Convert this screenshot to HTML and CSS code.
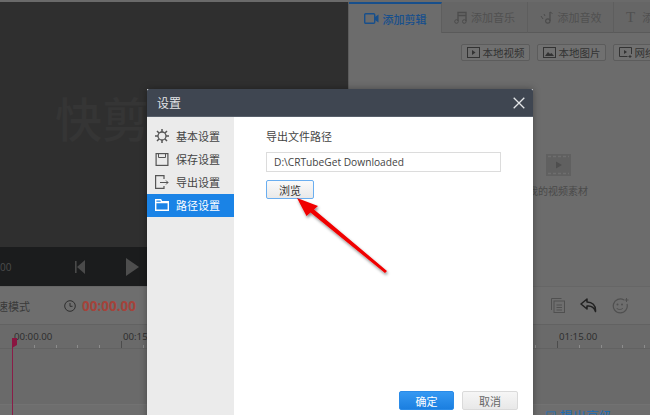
FILE: index.html
```html
<!DOCTYPE html>
<html lang="zh-CN">
<head>
  <meta charset="UTF-8" />
  <title>快剪辑 设置</title>
  <link rel="stylesheet" href="styles.css">
</head>
<body>
  <div class="app">
    <div class="topline"></div>

    <div class="main">
      <!-- Preview -->
      <div class="preview">
        <div class="video"><span class="watermark">快剪辑</span></div>
        <div class="controls">
          <span class="time-left">00</span>
          <svg class="ctl-prev" width="10" height="14" viewBox="0 0 10 14"><path d="M0 1h1.6v12H0zM10 0v14L2 7z" fill="#4a4a4a"/></svg>
          <svg class="ctl-play" width="13" height="18" viewBox="0 0 13 18"><path d="M0 0l13 9-13 9z" fill="#4e4e4e"/></svg>
        </div>
      </div>

      <!-- Material panel -->
      <div class="panel">
        <div class="tabs">
          <div class="tab active">
            <svg width="15" height="11" viewBox="0 0 15 11"><rect x=".7" y=".7" width="10" height="9.6" rx="1" fill="none" stroke="#174f8c" stroke-width="1.4"/><path d="M11 4l3.5-2.5v8L11 7z" fill="#174f8c"/></svg>
            添加剪辑
          </div>
          <div class="tab">
            <svg width="13" height="13" viewBox="0 0 13 13"><path d="M4 10V1.5h8V10M4 4.5h8" fill="none" stroke="#4c4c4c" stroke-width="1.3"/><circle cx="2.5" cy="10.5" r="1.8" fill="none" stroke="#4c4c4c"/><circle cx="10.3" cy="10.5" r="1.8" fill="none" stroke="#4c4c4c"/></svg>
            添加音乐
          </div>
          <div class="tab">
            <svg width="14" height="13" viewBox="0 0 14 13"><path d="M10 1v9" fill="none" stroke="#4c4c4c" stroke-width="1.3"/><circle cx="7.8" cy="10" r="2.2" fill="none" stroke="#4c4c4c" stroke-width="1.2"/><path d="M10 1l2.5 1.5M1 5l2 3M4 3l1 2" fill="none" stroke="#4c4c4c"/></svg>
            添加音效
          </div>
          <div class="tab tab-text">
            <span class="t-glyph">T</span>
            添加字幕
          </div>
        </div>

        <div class="src-row">
          <button class="src-btn">
            <svg width="13" height="11" viewBox="0 0 13 11"><rect x=".5" y=".5" width="12" height="10" fill="none" stroke="#333"/><path d="M5 3l3.5 2.5L5 8z" fill="#333"/></svg>
            本地视频
          </button>
          <button class="src-btn">
            <svg width="13" height="11" viewBox="0 0 13 11"><rect x=".5" y=".5" width="12" height="10" fill="none" stroke="#333"/><path d="M2 9l3-4 2 2 1.5-1L11 9z" fill="#333"/></svg>
            本地图片
          </button>
          <button class="src-btn">
            <svg width="13" height="12" viewBox="0 0 13 12"><path d="M12.500 7V.5H.5v9h8" fill="none" stroke="#333"/><path d="M5 3l3 2-3 2z" fill="#333"/><path d="M11 8v3M9.500 9.500h3" stroke="#333"/></svg>
            网络素材
          </button>
        </div>

        <div class="empty">
          <svg width="25" height="22" viewBox="0 0 25 22"><rect width="25" height="22" fill="#606060"/><path d="M2 2.500h21M2 19.500h21" stroke="#6e6e6e" stroke-width="1.500" stroke-dasharray="3 2"/><path d="M10 7.500l6 3.500-6 3.500z" fill="#4e4e4e"/></svg>
          <span>我的视频素材</span>
        </div>
      </div>
    </div>

    <!-- Timeline -->
    <div class="toolbar">
      <span class="mode">极速模式</span>
      <svg class="clock" width="12" height="12" viewBox="0 0 12 12"><circle cx="6" cy="6" r="5.300" fill="none" stroke="#2e2e2e"/><path d="M6 3v3.300h2.500" fill="none" stroke="#2e2e2e"/></svg>
      <span class="timecode">00:00.00</span>
      <div class="tool-icons">
        <svg width="14" height="15" viewBox="0 0 14 15"><path d="M.5 12V.5h10" fill="none" stroke="#505050"/><rect x="3" y="3" width="10.500" height="11.500" fill="none" stroke="#505050"/><path d="M5.500 7h5.500M5.500 9.500h5.500M5.500 12h5.500" stroke="#505050"/></svg>
        <svg width="17" height="15" viewBox="0 0 17 15"><path d="M7 1L1 6l6 5V8c4-.5 7 1 8.500 5.500C16 7 12 4 7 4z" fill="none" stroke="#222" stroke-width="1.500" stroke-linejoin="round"/></svg>
        <svg width="17" height="16" viewBox="0 0 17 16"><path d="M12 2a7 7 0 1 0 3 4" fill="none" stroke="#505050" stroke-width="1.200"/><circle cx="5.500" cy="6.500" r="1" fill="#505050"/><circle cx="10" cy="6.500" r="1" fill="#505050"/><path d="M4.500 10c1.500 2 5 2 6.500 0" fill="none" stroke="#505050"/><path d="M14.500 0v4M12.500 2h4" stroke="#505050"/></svg>
      </div>
    </div>

    <div class="timeline">
      <div class="ruler">
        <div class="mark">00:00.00</div>
        <div class="mark">00:15.00</div>
        <div class="mark">00:30.00</div>
        <div class="mark">00:45.00</div>
        <div class="mark">01:00.00</div>
        <div class="mark">01:15.00</div>
      </div>
      <div class="track"></div>
      <div class="track-foot"><span class="foot-link">☑ 提出高级</span></div>
      <div class="playhead"></div>
    </div>
  </div>

  <!-- Settings dialog -->
  <div class="dialog">
    <div class="dialog-head">
      <span>设置</span>
      <svg width="12" height="12" viewBox="0 0 12 12"><path d="M.7.7l10.600 10.600M11.300.7L.7 11.300" stroke="#e4e6e8" stroke-width="1.300"/></svg>
    </div>
    <div class="dialog-body">
      <ul class="side">
        <li>
          <svg width="14" height="14" viewBox="0 0 14 14"><circle cx="7" cy="7" r="4" fill="none" stroke="#555" stroke-width="1.300"/><path d="M7 0v3M7 11v3M0 7h3M11 7h3M2 2l2 2M10 10l2 2M12 2l-2 2M4 10l-2 2" stroke="#555" stroke-width="1.500"/></svg>
          基本设置
        </li>
        <li>
          <svg width="13" height="13" viewBox="0 0 13 13"><rect x=".6" y=".6" width="11.800" height="11.800" fill="none" stroke="#555" stroke-width="1.200"/><path d="M3 1v3.500h7V1" fill="none" stroke="#555"/></svg>
          保存设置
        </li>
        <li>
          <svg width="14" height="14" viewBox="0 0 14 14"><path d="M9 4V.6H.6v12.800H9V11" fill="none" stroke="#555" stroke-width="1.200"/><path d="M5 7.500h8M11 5.500l2 2-2 2" fill="none" stroke="#555"/></svg>
          导出设置
        </li>
        <li class="on">
          <svg width="14" height="12" viewBox="0 0 14 12"><path d="M.7.7h5l1 2h6.600v8.600H.7zM.7 3.500h12.600" fill="none" stroke="#fff" stroke-width="1.400"/></svg>
          路径设置
        </li>
      </ul>
      <div class="content">
        <label class="field-label">导出文件路径</label>
        <input class="path-input" type="text" value="D:\CRTubeGet Downloaded" />
        <button class="browse">浏览</button>
        <div class="actions">
          <button class="btn-ok">确定</button>
          <button class="btn-cancel">取消</button>
        </div>
      </div>
    </div>
  </div>

  <!-- Annotation arrow -->
  <svg class="arrow" width="92" height="78" viewBox="0 0 92 78">
    <defs><filter id="soft" x="-20%" y="-20%" width="140%" height="140%"><feDropShadow dx="1" dy="2" stdDeviation="1.500" flood-color="#000" flood-opacity=".45"/></filter></defs>
    <path d="M0 0L21 8l-4 3.500L90 73l-2 2-74.500-60.500L9.500 18z" fill="#f00000" filter="url(#soft)"/>
  </svg>
</body>
</html>
```
FILE: styles.css
```css
* {
  box-sizing: border-box;
}
body {
  margin: 0;
  width: 650px;
  height: 415px;
  overflow: hidden;
  position: relative;
  font-family: "Noto Sans CJK SC", "Open Sans", sans-serif;
  font-size: 11px;
  background: #6b6b6b;
  color: #333;
}
button, input {
  font-family: inherit;
}
.app {
  width: 650px;
  height: 415px;
  display: flex;
  flex-direction: column;
}
.topline {
  height: 2px;
  flex: none;
  background: #6a6a6a;
}

/* top half */
.main {
  display: flex;
  height: 284px;
  flex: none;
}
.preview {
  width: 349px;
  display: flex;
  flex-direction: column;
  border-right: 1px solid #5c5c5c;
}
.video {
  height: 245px;
  background: #2f2f2f;
  padding: 85px 0 0 55px;
  overflow: hidden;
}
.watermark {
  font-size: 47px;
  line-height: 60px;
  font-weight: 500;
  color: #353535;
  white-space: nowrap;
}
.controls {
  height: 39px;
  background: #1b1c1d;
  display: flex;
  align-items: center;
  color: #4c4c4c;
}
.time-left {
  width: 75px;
  font: 10px "Open Sans", sans-serif;
}
.ctl-prev {
  margin-right: 41px;
}
.panel {
  flex: 1;
  background: #6c6c6c;
  overflow: hidden;
}
.tabs {
  display: flex;
  height: 31px;
}
.tab {
  width: 86px;
  flex: none;
  display: flex;
  align-items: center;
  justify-content: center;
  gap: 4px;
  color: #505050;
  background: #666;
  border-bottom: 1px solid #5a5a5a;
  border-right: 1px solid #5e5e5e;
  white-space: nowrap;
}
.tab.active {
  width: 93px;
  color: #174f8c;
  font-weight: 500;
  background: #6c6c6c;
  border-top: 2px solid #174f8c;
  border-bottom: 0;
}
.tab-text {
  justify-content: flex-start;
  padding-left: 12px;
  gap: 7px;
}
.t-glyph {
  font: 15px "Liberation Serif", serif;
}
.src-row {
  display: flex;
  gap: 7px;
  padding: 11px 0 0 112px;
}
.src-btn {
  width: 69px;
  height: 17px;
  flex: none;
  padding: 0;
  display: flex;
  align-items: center;
  justify-content: center;
  gap: 3px;
  font-size: 10.5px;
  color: #333;
  background: #707070;
  border: 1px solid #5c5c5c;
  border-radius: 2px;
  white-space: nowrap;
}
.empty {
  width: 118px;
  margin: 93px 0 0 150px;
  display: flex;
  flex-direction: column;
  align-items: center;
  gap: 7px;
  font-size: 10px;
  color: #4a4a4a;
}

/* timeline */
.toolbar {
  height: 39px;
  flex: none;
  display: flex;
  align-items: center;
  background: #6e6e6e;
  border-top: 1px solid #666;
  border-bottom: 1px solid #626262;
}
.mode {
  margin-left: -14px;
  width: 78px;
  flex: none;
  color: #3a3a3a;
}
.clock {
  margin-right: 6px;
}
.timecode {
  font: 700 13.5px "Open Sans", sans-serif;
  color: #a4433b;
}
.tool-icons {
  margin-left: auto;
  display: flex;
  align-items: center;
  gap: 15px;
  padding-right: 21px;
}
.timeline {
  flex: 1;
  min-height: 0;
  position: relative;
  background: #6a6a6a;
  display: flex;
  flex-direction: column;
}
.ruler {
  height: 24px;
  flex: none;
  display: flex;
  padding-left: 12px;
  border-bottom: 1px solid #626262;
  background: repeating-linear-gradient(90deg, #8c8c8c 0 1px, transparent 1px 21.8px) 12px 20px / 100% 3px no-repeat;
}
.mark {
  width: 109px;
  flex: none;
  padding: 4px 0 0 1px;
  font: 9.7px/16px "Open Sans", sans-serif;
  color: #2c2c2c;
  border-left: 1px solid #565656;
  border-image: linear-gradient(to bottom, transparent 16px, #4c4c4c 16px) 1;
}
.track {
  height: 56px;
  flex: none;
  border-bottom: 1px solid #727272;
}
.track-foot {
  flex: 1;
  min-height: 0;
  overflow: hidden;
  background: #6e6e6e;
}
.foot-link {
  display: block;
  margin: 4px 0 0 545px;
  font-size: 13px;
  line-height: 14px;
  color: #1c6fb4;
  white-space: nowrap;
}
.playhead {
  position: absolute;
  left: 12px;
  top: 13px;
  bottom: 0;
  width: 1px;
  background: #8a1d48;
}
.playhead::before {
  content: "";
  position: absolute;
  left: 0;
  top: 0;
  width: 5px;
  height: 10px;
  background: #8a1540;
  clip-path: polygon(0 0, 100% 0, 100% 70%, 0 100%);
}

/* dialog */
.dialog {
  position: absolute;
  left: 147px;
  top: 89px;
  width: 386px;
  height: 340px;
  background: #fff;
  box-shadow: 0 0 7px rgba(0, 0, 0, 0.35);
  display: flex;
  flex-direction: column;
}
.dialog-head {
  height: 28px;
  flex: none;
  padding: 0 8px 0 10px;
  display: flex;
  align-items: center;
  justify-content: space-between;
  background: #3f4651;
  border-bottom: 1px solid #58606b;
  border-radius: 2px 2px 0 0;
  font-size: 12px;
  color: #e2e4e7;
}
.dialog-body {
  flex: 1;
  display: flex;
}
.side {
  width: 87px;
  flex: none;
  margin: 0;
  padding: 8px 0 0;
  list-style: none;
  background: #ebebeb;
}
.side li {
  height: 23px;
  display: flex;
  align-items: center;
  padding: 0 0 1px 8px;
  gap: 7px;
  color: #444;
}
.side svg {
  width: 14px;
  flex: none;
}
.side li.on {
  background: #1a83e6;
  color: #fff;
}
.content {
  flex: 1;
  padding: 11px 32px 0;
  display: flex;
  flex-direction: column;
  align-items: flex-start;
  position: relative;
}
.field-label {
  line-height: 16px;
  color: #444;
}
.path-input {
  width: 235px;
  height: 20px;
  margin-top: 8px;
  padding: 0 7px;
  border: 1px solid #dcdcdc;
  outline: none;
  font: 10.2px "Open Sans", sans-serif;
  color: #444;
}
.browse {
  width: 48px;
  height: 19px;
  margin-top: 8px;
  padding: 0;
  font-size: 11px;
  color: #333;
  background: linear-gradient(#fafafa, #e9e9e9);
  border: 1px solid #6aaef0;
  border-radius: 2px;
}
.actions {
  margin-top: 192px;
  margin-left: 133px;
  display: flex;
  gap: 8px;
}
.actions button {
  width: 55px;
  height: 19px;
  padding: 0;
  font-size: 11px;
  border-radius: 2px;
}
.btn-ok {
  color: #fff;
  background: linear-gradient(#3598f2, #1b7fe0);
  border: 1px solid #2a8be8;
}
.btn-cancel {
  color: #666;
  background: linear-gradient(#f6f6f6, #e8e8e8);
  border: 1px solid #dadada;
}
.actions .btn-cancel {
  width: 56px;
}
.arrow {
  position: absolute;
  left: 297px;
  top: 198px;
  overflow: visible;
}
```
